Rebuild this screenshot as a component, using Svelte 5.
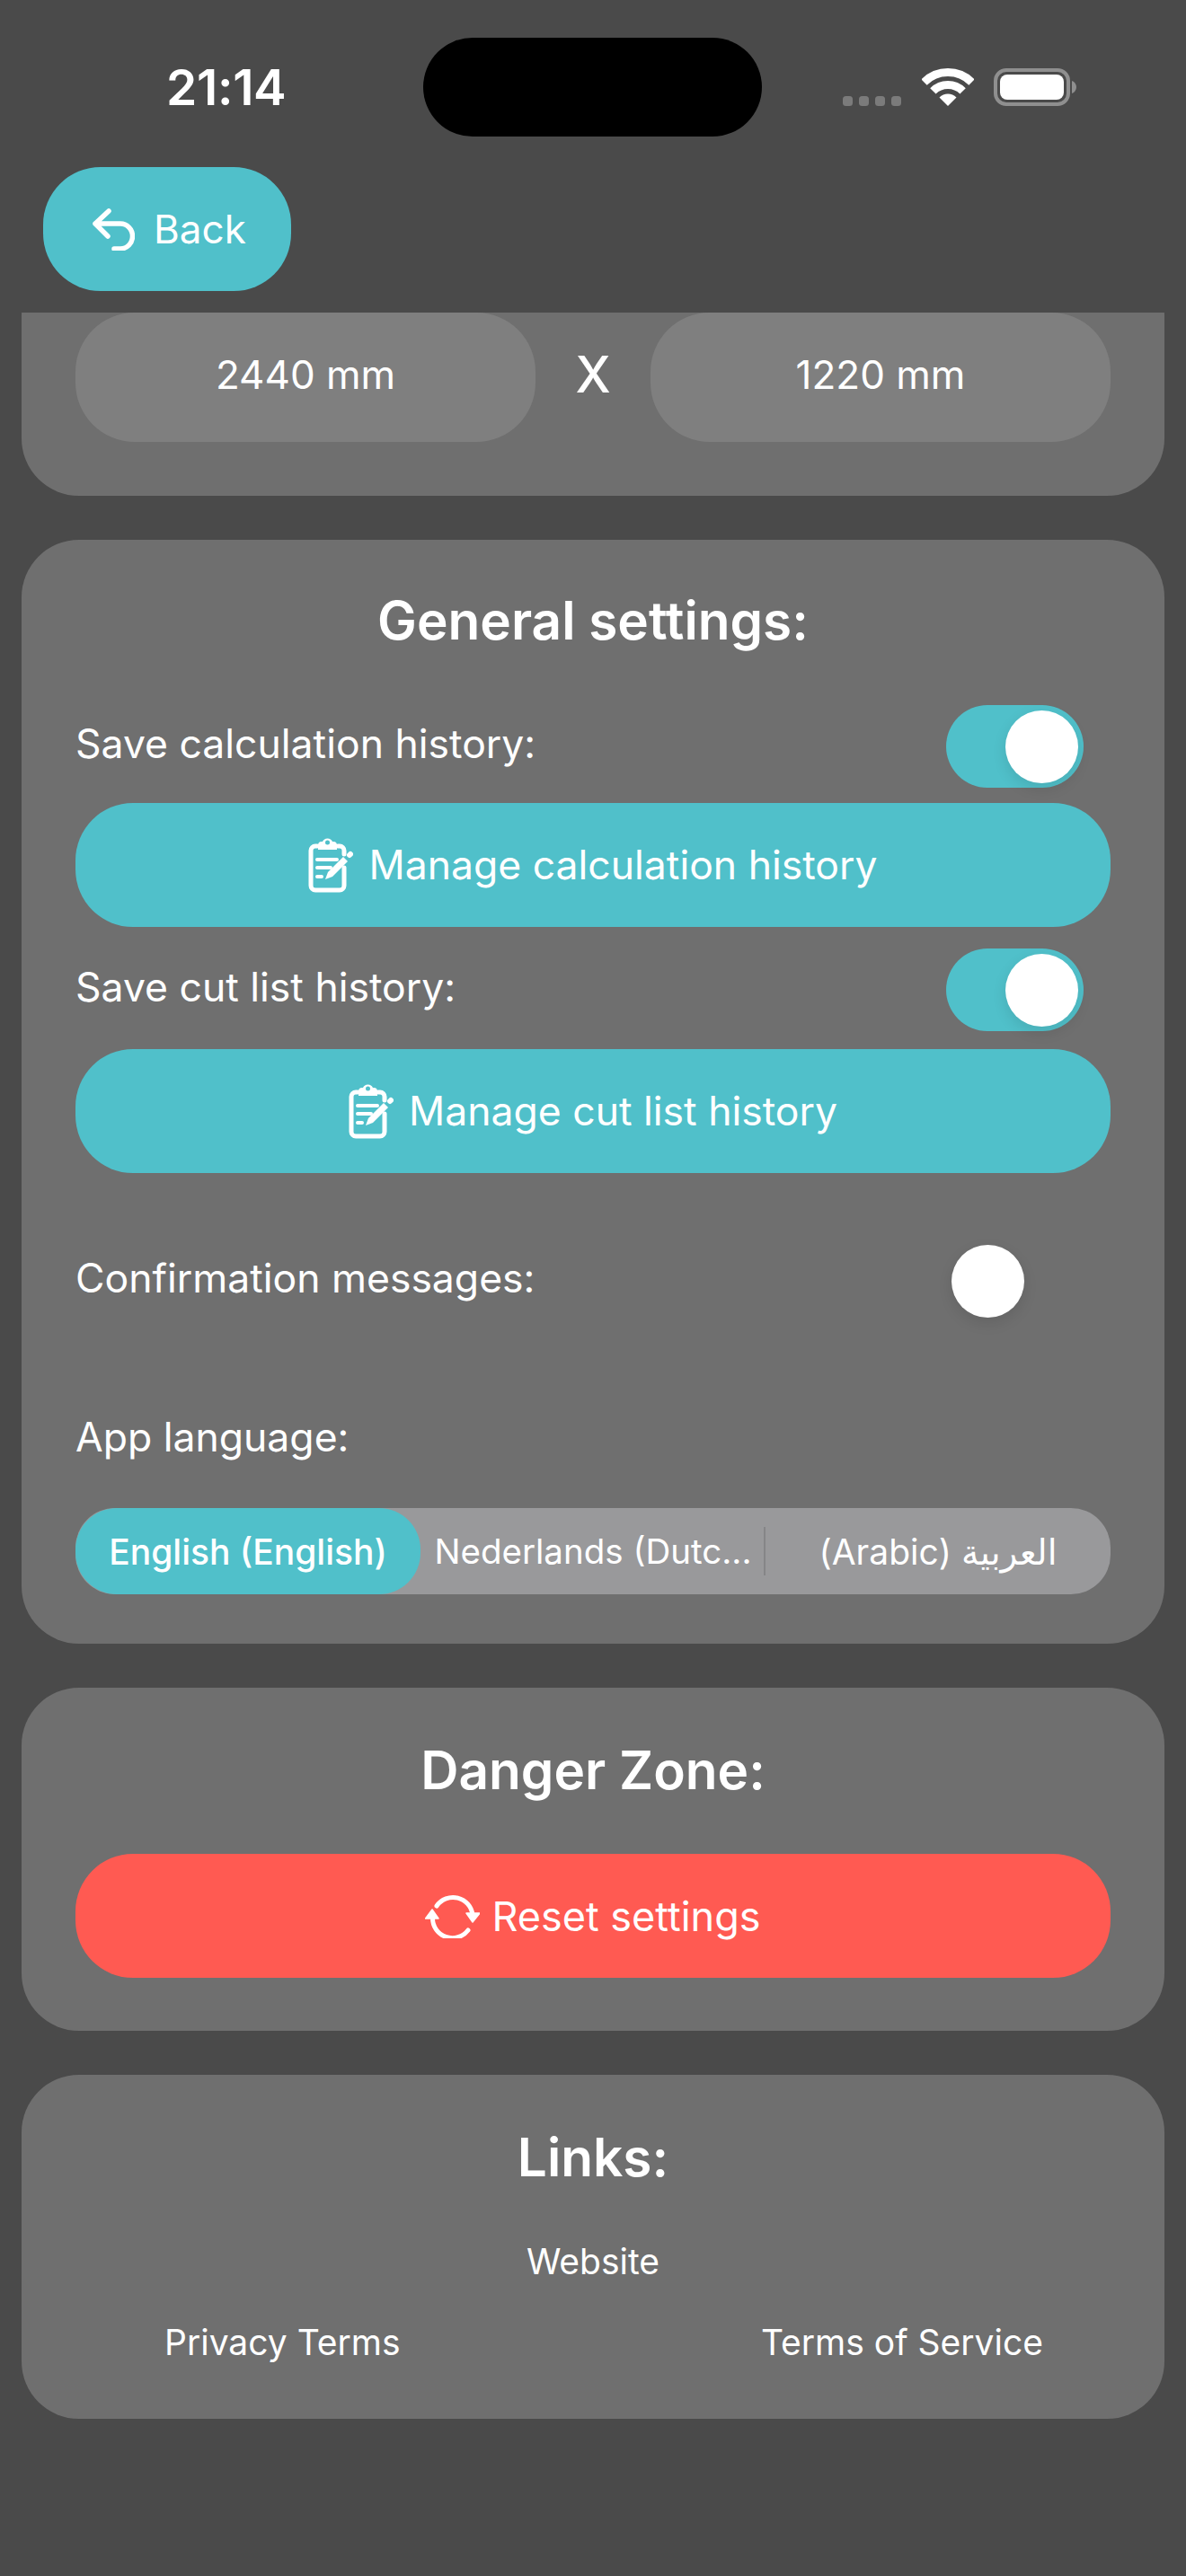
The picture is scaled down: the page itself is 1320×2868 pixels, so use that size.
<script>
    const links = ["Privacy Terms", "Terms of Service"];
</script>

<div class="page">
    <div class="status">
        <span class="time">21:14</span>
        <div class="island"></div>
        <div class="status-icons">
            <div class="dots"><i></i><i></i><i></i><i></i></div>
            <svg width="58" height="42" viewBox="0 0 58 42" fill="none" aria-hidden="true">
                <path d="M2.5 15.5A37.5 37.5 0 0 1 55.5 15.5" stroke="#fff" stroke-width="9" />
                <path d="M12.4 25.4A23.5 23.5 0 0 1 45.6 25.4" stroke="#fff" stroke-width="9" />
                <path d="M29 42L19.5 32.5A13.5 13.5 0 0 1 38.5 32.5Z" fill="#fff" />
            </svg>
            <svg width="92" height="42" viewBox="0 0 92 42" aria-hidden="true">
                <rect x="2" y="2" width="81" height="38" rx="12" fill="none" stroke="#8f8f8f" stroke-width="4" />
                <rect x="7" y="7" width="71" height="28" rx="8" fill="#fff" />
                <path d="M87 14C90 15 92 18 92 21C92 24 90 27 87 28Z" fill="#8f8f8f" />
            </svg>
        </div>
    </div>

    <button class="back" type="button">
        <svg width="47" height="47" viewBox="0 0 47 47" fill="none" stroke="#fff" stroke-width="5.5" stroke-linecap="round" stroke-linejoin="round" aria-hidden="true">
            <path d="M18 3L3 17L17 31M3 17H31A13.5 14 0 0 1 31 45H24" />
        </svg>
        Back
    </button>

    <div class="scroller">
        <section class="card sheet">
            <div class="size-row">
                <div class="size-input">2440 mm</div>
                <span class="times">X</span>
                <div class="size-input">1220 mm</div>
            </div>
        </section>

        <section class="card general">
            <h2>General settings:</h2>
            <div class="row first">
                <span>Save calculation history:</span>
                <div class="toggle on"><div class="knob"></div></div>
            </div>
            <button class="wide" type="button">
                {@render clipboard()}
                Manage calculation history
            </button>
            <div class="row second">
                <span>Save cut list history:</span>
                <div class="toggle on"><div class="knob"></div></div>
            </div>
            <button class="wide" type="button">
                {@render clipboard()}
                Manage cut list history
            </button>
            <div class="row third">
                <span>Confirmation messages:</span>
                <div class="toggle"><div class="knob"></div></div>
            </div>
            <div class="lang-label">App language:</div>
            <div class="segments">
                <div class="segment active">English (English)</div>
                <div class="segment middle">Nederlands (Dutc...</div>
                <div class="segment"><span dir="rtl">العربية (Arabic)</span></div>
            </div>
        </section>

        <section class="card danger">
            <h2>Danger Zone:</h2>
            <button class="wide red" type="button">
                <svg width="61" height="50" viewBox="0 0 61 50" fill="none" aria-hidden="true">
                    <path d="M13 14A22 22 0 0 1 53 24" stroke="#fff" stroke-width="5" stroke-linecap="round" />
                    <path d="M48 41A22 22 0 0 1 8.500 27" stroke="#fff" stroke-width="5" stroke-linecap="round" />
                    <path d="M46 22H61L53 32Z" fill="#fff" stroke="#fff" stroke-width="1.500" stroke-linejoin="round" />
                    <path d="M0.500 28H15L8 18Z" fill="#fff" stroke="#fff" stroke-width="1.500" stroke-linejoin="round" />
                </svg>
                Reset settings
            </button>
        </section>

        <section class="card links">
            <h2>Links:</h2>
            <div class="website">Website</div>
            <div class="link-row">
                {#each links as link}
                    <span>{link}</span>
                {/each}
            </div>
        </section>
    </div>
</div>

{#snippet clipboard()}
    <svg width="50" height="61" viewBox="0 0 50 61" fill="none" aria-hidden="true">
        <path d="M10 9H8A5 5 0 0 0 3 14V53A5 5 0 0 0 8 58H35A5 5 0 0 0 40 53V33M33 9H35A5 5 0 0 1 40 14V18" stroke="#fff" stroke-width="5" stroke-linecap="round" />
        <path fill-rule="evenodd" d="M15 4H16A6 6 0 0 1 27 4H28A4 4 0 0 1 32 8V13H11V8A4 4 0 0 1 15 4ZM21.500 2.500A2.500 2.500 0 1 0 21.500 7.500A2.500 2.500 0 1 0 21.500 2.500Z" fill="#fff" />
        <path d="M10 24H32M10 33H25M10 43H15" stroke="#fff" stroke-width="4" stroke-linecap="round" />
        <path d="M19 46L22 38L39 21L44 26L27 43Z" fill="#fff" />
        <path d="M46 19L47 18" stroke="#fff" stroke-width="6" stroke-linecap="round" />
    </svg>
{/snippet}

<style>
    :global(body) {
        background: #4a4a4a;
    }

    .page {
        height: 2868px;
        overflow: hidden;
        background: #4a4a4a;
        color: #fff;
        font-family: Inter, "DejaVu Sans", "Noto Sans", sans-serif;
    }

    .status {
        display: flex;
        align-items: center;
        height: 110px;
        padding: 42px 0 34px 185px;
    }

    .time {
        width: 286px;
        font-size: 55px;
        font-weight: 600;
        letter-spacing: -0.3px;
    }

    .island {
        width: 377px;
        height: 110px;
        border-radius: 55px;
        background: #000;
    }

    .status-icons {
        display: flex;
        align-items: flex-end;
        gap: 22px;
        margin-left: 90px;
    }

    .dots {
        display: flex;
        gap: 7px;
        margin-right: 1px;
    }

    .dots i {
        width: 11px;
        height: 11px;
        border-radius: 3.500px;
        background: #7b7b7b;
    }

    button {
        font: inherit;
        color: #fff;
        border: none;
    }

    .back {
        display: flex;
        align-items: center;
        gap: 21px;
        width: 276px;
        height: 138px;
        margin-left: 48px;
        padding: 0 0 0 55px;
        border-radius: 64px;
        background: #50c0ca;
        font-size: 44px;
    }

    .scroller {
        height: 2520px;
        margin-top: 24px;
        padding: 0 24px;
        overflow: hidden;
    }

    .card {
        margin-bottom: 49px;
        border-radius: 64px;
        background: #6f6f6f;
    }

    .sheet {
        margin-top: -60px;
        padding: 60px 60px 60px;
    }

    .size-row {
        display: flex;
        align-items: center;
        justify-content: space-between;
    }

    .size-input {
        display: flex;
        align-items: center;
        justify-content: center;
        width: 512px;
        height: 144px;
        padding-bottom: 6px;
        box-sizing: border-box;
        border-radius: 66px;
        background: #7f7f7f;
        font-size: 44px;
    }

    .times {
        margin-top: -6px;
        font-size: 56px;
        font-weight: 500;
    }

    h2 {
        margin: 0;
        font-size: 58.500px;
        line-height: 60px;
        font-weight: 600;
        text-align: center;
    }

    .general {
        height: 1229px;
        padding: 60px 60px 0;
        box-sizing: border-box;
    }

    .row {
        display: flex;
        align-items: center;
        justify-content: space-between;
        padding-right: 30px;
        font-size: 44.500px;
    }

    .first {
        margin-top: 64px;
        margin-bottom: 17px;
    }

    .second {
        margin-top: 24px;
        margin-bottom: 20px;
    }

    .third {
        margin-top: 74px;
    }

    .row span {
        margin-top: -6px;
    }

    .toggle {
        display: flex;
        align-items: center;
        box-sizing: border-box;
        width: 153px;
        height: 92px;
        padding: 0 6px;
        border-radius: 46px;
    }

    .toggle.on {
        justify-content: flex-end;
        background: #50c0ca;
    }

    .knob {
        width: 81px;
        height: 81px;
        border-radius: 50%;
        background: #fff;
        box-shadow: 0 6px 16px rgba(0, 0, 0, 0.1);
    }

    .wide {
        display: flex;
        align-items: center;
        justify-content: center;
        gap: 17px;
        width: 100%;
        height: 138px;
        border-radius: 64px;
        background: #50c0ca;
        font-size: 44.500px;
    }

    .lang-label {
        margin-top: 100px;
        font-size: 44.500px;
        line-height: 56px;
    }

    .segments {
        display: grid;
        grid-template-columns: repeat(3, 1fr);
        height: 96px;
        margin-top: 51px;
        border-radius: 44px;
        background: #99999b;
        font-size: 39px;
    }

    .segment {
        display: flex;
        align-items: center;
        justify-content: center;
        min-width: 0;
        white-space: nowrap;
        position: relative;
    }

    .segment.active {
        border-radius: 46px;
        background: #50c0ca;
        font-weight: 500;
    }

    .middle {
        font-size: 38.500px;
    }

    .middle::after {
        content: "";
        position: absolute;
        right: 0;
        top: 21px;
        bottom: 21px;
        width: 2px;
        background: #858587;
    }

    .danger {
        height: 382px;
        padding: 62px 60px 0;
        box-sizing: border-box;
    }

    .red {
        margin-top: 63px;
        background: #ff5a52;
        gap: 13px;
        font-size: 45px;
    }

    .links {
        height: 383px;
        padding: 62px 60px 0;
        box-sizing: border-box;
    }

    .website {
        margin-top: 60px;
        text-align: center;
        font-size: 39px;
        line-height: 52px;
    }

    .link-row {
        display: flex;
        justify-content: space-between;
        margin-top: 38px;
        padding: 0 75px 0 99px;
        font-size: 39px;
        line-height: 52px;
    }
</style>
